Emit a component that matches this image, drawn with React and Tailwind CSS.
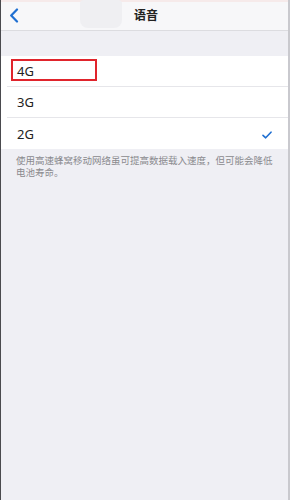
const rows = [
  { label: "4G", marked: true },
  { label: "3G" },
  { label: "2G", checked: true },
];

export default function App() {
  return (
    <div
      className="flex w-[290px] h-[500px] bg-[#efeff4] overflow-hidden"
      style={{ fontFamily: "'Noto Sans', 'Noto Sans CJK SC', sans-serif" }}
    >
      <div className="w-px bg-[#4a4a4e] shrink-0" />
      <div className="flex flex-col flex-1">
        {/* Nav bar */}
        <div className="relative h-[31px] bg-[#f7f7f9] border-b border-[#dcdce0] flex items-center shrink-0">
          <div className="absolute top-0 left-0 right-0 h-[2px] bg-[#f6eaea]" />
          <div className="absolute left-[79px] top-0 w-[42px] h-[28px] rounded-b-lg rounded-t-sm bg-[#efeff2]" />
          <svg className="absolute left-[8px] top-[8px]" width="10" height="15" viewBox="0 0 10 15">
            <path d="M8 1.5 L2.2 7.5 L8 13.5" fill="none" stroke="#1f6fd1" strokeWidth="2.2" strokeLinecap="round" strokeLinejoin="round" />
          </svg>
          <div className="flex-1 text-center text-[12px] font-bold text-[#222] pl-[3px]" style={{ fontFamily: "'Noto Sans CJK SC', sans-serif" }}>
            语音
          </div>
        </div>

        <div className="h-[25px] shrink-0" />

        {/* Options */}
        <div className="bg-white flex flex-col">
          {rows.map((r, i) => (
            <div key={r.label} className="relative h-[31px] flex items-center pl-[6px]">
              <div className={`flex-1 h-full flex items-center pl-[10px] pr-[16px] pt-[2px] ${i < rows.length - 1 ? "border-b border-[#e6e6ea]" : ""}`}>
                <span className="text-[13px] text-[#222] flex-1">{r.label}</span>
                {r.checked && (
                  <svg width="10" height="8" viewBox="0 0 10 8">
                    <path d="M1 4.3 L3.7 6.8 L9 1.2" fill="none" stroke="#1f6fd1" strokeWidth="1.6" strokeLinecap="round" strokeLinejoin="round" />
                  </svg>
                )}
              </div>
              {r.marked && (
                <div className="absolute left-[10px] top-[3px] w-[86px] h-[22px] border-2 border-[#e0242c]" />
              )}
            </div>
          ))}
        </div>

        {/* Footer */}
        <p
          className="w-[280px] pl-[15px] pt-[6px] text-[9.5px] leading-[11.5px] text-[#8a8a8e]"
          style={{ fontFamily: "'Noto Sans CJK SC', sans-serif" }}
        >
          使用高速蜂窝移动网络虽可提高数据载入速度，但可能会降低电池寿命。
        </p>
      </div>
      <div className="w-[2px] bg-[#c9c9ce] shrink-0" />
    </div>
  );
}
